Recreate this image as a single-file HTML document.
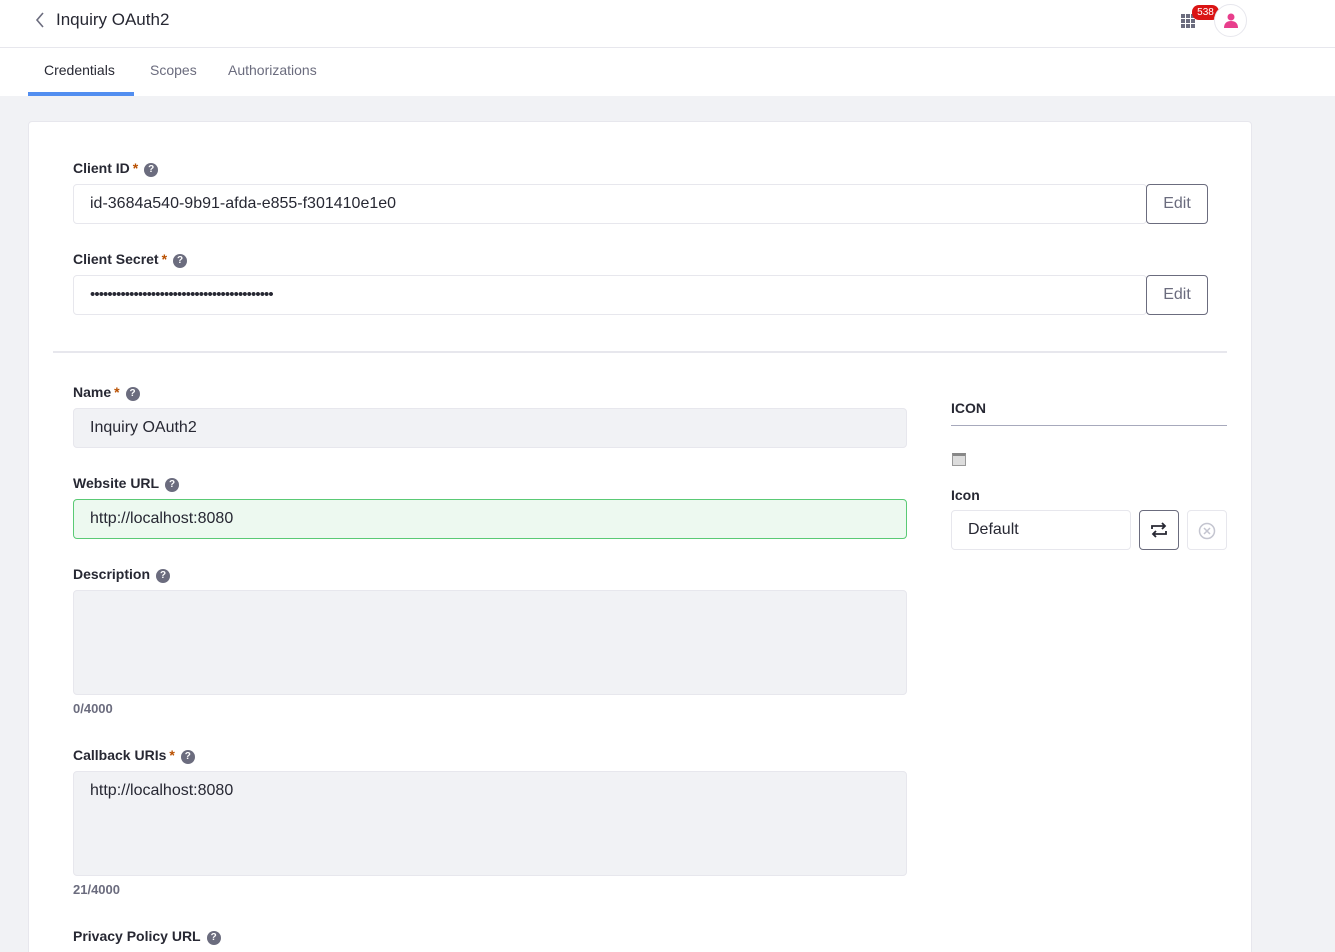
<!DOCTYPE html><html><head><style>
*{box-sizing:border-box;margin:0;padding:0}
html,body{width:1335px;height:952px;overflow:hidden}
body{background:#f1f2f5;font-family:"Liberation Sans",sans-serif;color:#272833;position:relative}
.hdr{position:absolute;left:0;top:0;width:1335px;height:48px;background:#fff;border-bottom:1px solid #e7e7ed}
.tabs{position:absolute;left:0;top:48px;width:1335px;height:48px;background:#fff}
.tab{position:absolute;top:14px;font-size:14px;color:#6b6c7e}
.card{position:absolute;left:28px;top:121px;width:1224px;height:840px;background:#fff;border:1px solid #e7e7ed;border-radius:4px}
.lbl{position:absolute;font-size:14px;font-weight:bold;color:#272833}
.lbl .s{color:#b95000;margin-left:3px}
.q{display:inline-block;width:14px;height:14px;border-radius:50%;background:#6b6c7e;color:#fff;font-size:10px;text-align:center;line-height:14px;margin-left:6px;vertical-align:1px}
.in{position:absolute;border:1px solid #e7e7ed;border-radius:4px;font-size:16px;padding:0 16px;line-height:38px;color:#272833}
.gray{background:#f1f2f5}
.btn{position:absolute;border:1px solid #6b6c7e;border-radius:4px;background:#fff;font-size:16px;color:#6b6c7e;text-align:center;line-height:38px}
.cnt{position:absolute;font-size:13px;font-weight:bold;color:#6b6c7e}
</style></head><body>
<div class="hdr">
<svg style="position:absolute;left:35px;top:12px" width="10" height="16"><path d="M8 1L2 8l6 7" stroke="#6b6c7e" stroke-width="1.6" fill="none"/></svg>
<div style="position:absolute;left:56px;top:10px;font-size:17px;color:#272833">Inquiry OAuth2</div>
<svg style="position:absolute;left:1181px;top:14px" width="15" height="15" fill="#6b6c7e"><rect x="0" y="0" width="4" height="4"/><rect x="5" y="0" width="4" height="4"/><rect x="10" y="0" width="4" height="4"/><rect x="0" y="5" width="4" height="4"/><rect x="5" y="5" width="4" height="4"/><rect x="10" y="5" width="4" height="4"/><rect x="0" y="10" width="4" height="4"/><rect x="5" y="10" width="4" height="4"/><rect x="10" y="10" width="4" height="4"/></svg>
<div style="position:absolute;left:1192px;top:5px;width:27px;height:15px;border-radius:7px;background:#da1414;color:#fff;font-size:10px;text-align:center;line-height:15px">538</div>
<div style="position:absolute;left:1214px;top:4px;width:33px;height:33px;border-radius:50%;border:1px solid #e7e7ed;background:#fff"><svg style="position:absolute;left:9px;top:8px" width="14" height="16" fill="#e83e8c"><circle cx="7" cy="4" r="3.5"/><path d="M0 15c0-5 3-7 7-7s7 2 7 7z"/></svg></div>
</div>
<div class="tabs">
<div class="tab" style="left:44px;color:#272833">Credentials</div>
<div class="tab" style="left:150px">Scopes</div>
<div class="tab" style="left:228px">Authorizations</div>
<div style="position:absolute;left:28px;top:44px;width:106px;height:4px;background:#528ef0"></div>
</div>
<div class="card"></div>
<div class="lbl" style="left:73px;top:160px">Client ID<span class="s">*</span><span class="q">?</span></div>
<div class="in" style="left:73px;top:184px;width:1074px;height:40px">id-3684a540-9b91-afda-e855-f301410e1e0</div>
<div class="btn" style="left:1146px;top:184px;width:62px;height:40px">Edit</div>
<div class="lbl" style="left:73px;top:251px">Client Secret<span class="s">*</span><span class="q">?</span></div>
<div class="in" style="left:73px;top:275px;width:1074px;height:40px;font-size:15px;letter-spacing:-0.9px">••••••••••••••••••••••••••••••••••••••••••</div>
<div class="btn" style="left:1146px;top:275px;width:62px;height:40px">Edit</div>
<div style="position:absolute;left:53px;top:351px;width:1174px;height:2px;background:#e7e7ed"></div>
<div class="lbl" style="left:73px;top:384px">Name<span class="s">*</span><span class="q">?</span></div>
<div class="in gray" style="left:73px;top:408px;width:834px;height:40px">Inquiry OAuth2</div>
<div class="lbl" style="left:73px;top:475px">Website URL<span class="q">?</span></div>
<div class="in" style="left:73px;top:499px;width:834px;height:40px;background:#edf9f0;border-color:#5aca75">http://localhost:8080</div>
<div class="lbl" style="left:73px;top:566px">Description<span class="q">?</span></div>
<div class="in gray" style="left:73px;top:590px;width:834px;height:105px"></div>
<div class="cnt" style="left:73px;top:701px">0/4000</div>
<div class="lbl" style="left:73px;top:747px">Callback URIs<span class="s">*</span><span class="q">?</span></div>
<div class="in gray" style="left:73px;top:771px;width:834px;height:105px;line-height:38px">http://localhost:8080</div>
<div class="cnt" style="left:73px;top:882px">21/4000</div>
<div class="lbl" style="left:73px;top:928px">Privacy Policy URL<span class="q">?</span></div>
<div class="lbl" style="left:951px;top:400px">ICON</div>
<div style="position:absolute;left:951px;top:425px;width:276px;height:1px;background:#a7a9bc"></div>
<div style="position:absolute;left:952px;top:453px;width:14px;height:13px;border:1px solid #999;background:#ddd;border-top:3px solid #888"></div>
<div class="lbl" style="left:951px;top:487px">Icon</div>
<div class="in" style="left:951px;top:510px;width:180px;height:40px">Default</div>
<div class="btn" style="left:1139px;top:510px;width:40px;height:40px;border-color:#6b6c7e"><svg style="margin-top:11px" width="18" height="16" fill="none" stroke="#272833" stroke-width="1.8"><path d="M2 7V4h13M12 1l3 3-3 3M16 9v3H3M6 9l-3 3 3 3"/></svg></div>
<div class="btn" style="left:1187px;top:510px;width:40px;height:40px;border-color:#e7e7ed"><svg style="margin-top:11px" width="18" height="18" fill="none" stroke="#c4c5d0" stroke-width="1.5"><circle cx="9" cy="9" r="7.5"/><path d="M6 6l6 6M12 6l-6 6"/></svg></div>
</body></html>
